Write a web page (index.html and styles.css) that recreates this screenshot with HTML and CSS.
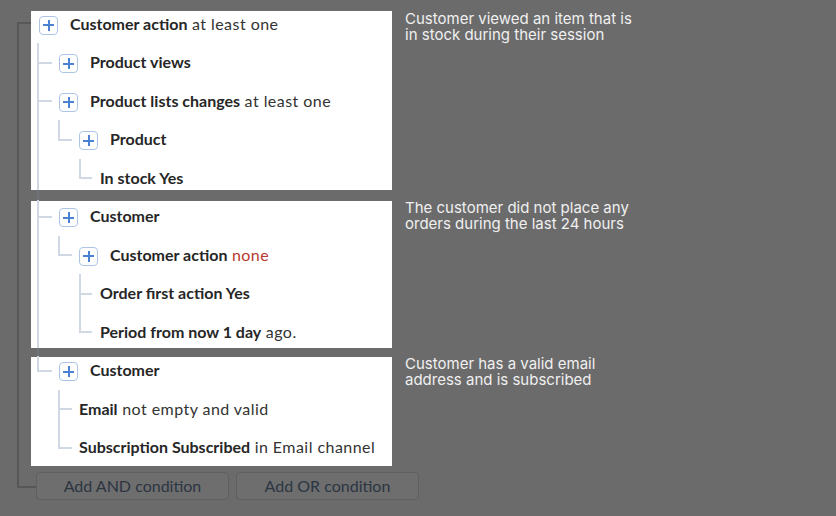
FILE: index.html
```html
<!DOCTYPE html>
<html lang="en">
<head>
<meta charset="utf-8">
<title>Segment conditions</title>
<link rel="stylesheet" href="styles.css">
</head>
<body>
<main class="screen">
  <div class="builder">
    <section class="group g1">
      <div class="row lv0"><button class="add" aria-label="Expand"></button><span class="label"><b>Customer action</b> at least one</span></div>
      <div class="row lv1 t-mid1"><button class="add" aria-label="Expand"></button><span class="label"><b>Product views</b></span></div>
      <div class="row lv1 t-mid1"><button class="add" aria-label="Expand"></button><span class="label"><b>Product lists changes</b> at least one</span></div>
      <div class="row lv2 t-el2"><button class="add" aria-label="Expand"></button><span class="label"><b>Product</b></span></div>
      <div class="row lv3 t-el3 cut-b1"><span class="label"><b>In stock Yes</b></span></div>
    </section>
    <p class="note n1">Customer viewed an item that is<br>in stock during their session</p>

    <section class="group g2">
      <div class="row lv1 t-mid1 cut-t2"><button class="add" aria-label="Expand"></button><span class="label"><b>Customer</b></span></div>
      <div class="row lv2 t-el2"><button class="add" aria-label="Expand"></button><span class="label"><b>Customer action</b> <span class="neg">none</span></span></div>
      <div class="row lv3 t-mid3"><span class="label"><b>Order first action Yes</b></span></div>
      <div class="row lv3 t-el3 cut-b2"><span class="label"><b>Period from now 1 day</b> ago.</span></div>
    </section>
    <p class="note n2">The customer did not place any<br>orders during the last 24 hours</p>

    <section class="group g3">
      <div class="row lv1 t-last1 cut-t3"><button class="add" aria-label="Expand"></button><span class="label"><b>Customer</b></span></div>
      <div class="row lv2leaf t-mid2x"><span class="label"><b>Email</b> not empty and valid</span></div>
      <div class="row lv2leaf t-last2x"><span class="label"><b>Subscription Subscribed</b> in Email channel</span></div>
    </section>
    <p class="note n3">Customer has a valid email<br>address and is subscribed</p>

    <div class="actions">
      <button class="btn btn-and">Add AND condition</button>
      <button class="btn btn-or">Add OR condition</button>
    </div>
  </div>
</main>
</body>
</html>
```

FILE: styles.css
```css
* { box-sizing: border-box; }

html, body {
  margin: 0;
  height: 100%;
}

body {
  background: #6b6b6b;
  font-family: "Lato", "Noto Sans", sans-serif;
  color: #2b2b2b;
}

.screen {
  width: 836px;
  height: 516px;
  overflow: hidden;
}

.builder {
  --bracket: #575757;
  margin-left: 17px;
  padding: 4.75px 0 0 14px;
  display: grid;
  grid-template-columns: 361px 1fr;
  column-gap: 13px;
  align-items: start;
  align-content: start;
  background:
    linear-gradient(var(--bracket), var(--bracket)) 0 22px / 2px 466px no-repeat,
    linear-gradient(var(--bracket), var(--bracket)) 0 22px / 14px 2px no-repeat,
    linear-gradient(var(--bracket), var(--bracket)) 0 486px / 19px 2px no-repeat;
  height: 516px;
}

/* highlighted groups */
.group {
  grid-column: 1;
  background: linear-gradient(#fff, #fff) 0 var(--inset-top) / 100% var(--inset-h) no-repeat;
}
.g1 { --inset-top: 6.25px; --inset-h: 179px; }
.g2 { --inset-top: 3.25px; --inset-h: 147px; }
.g3 { --inset-top: 5.25px; --inset-h: 109px; }

/* rows */
.row {
  --ln: #d0d9e3;
  --dim: #6f7276;
  --d1: 0px;
  --d2: 100%;
  height: 38.5px;
  display: flex;
  align-items: center;
  font-size: 16px;
  white-space: nowrap;
}

.lv0 { padding-left: 8px; }
.lv1 { padding-left: 28px; }
.lv2 { padding-left: 48px; }
.lv2leaf { padding-left: 48px; }
.lv3 { padding-left: 69px; }

.cut-b1 { --d2: 30.75px; }
.cut-b2 { --d2: 34.75px; }
.cut-t2 { --d1: 3.25px; }
.cut-t3 { --d1: 5.25px; }

/* connector lines */
.t-mid1 {
  background:
    linear-gradient(var(--ln), var(--ln)) 6px 50% / 15px 2px no-repeat,
    linear-gradient(to bottom, var(--dim) var(--d1), var(--ln) var(--d1), var(--ln) var(--d2), var(--dim) var(--d2)) 6px 0 / 2px 100% no-repeat;
}
.t-last1 {
  background:
    linear-gradient(var(--ln), var(--ln)) 6px 50% / 15px 2px no-repeat,
    linear-gradient(to bottom, var(--dim) var(--d1), var(--ln) var(--d1)) 6px 0 / 2px 50% no-repeat;
}
.t-el2 {
  background:
    linear-gradient(var(--ln), var(--ln)) 27px 50% / 14px 2px no-repeat,
    linear-gradient(var(--ln), var(--ln)) 27px 0 / 2px 50% no-repeat,
    linear-gradient(to bottom, var(--dim) var(--d1), var(--ln) var(--d1), var(--ln) var(--d2), var(--dim) var(--d2)) 6px 0 / 2px 100% no-repeat;
}
.t-el3 {
  background:
    linear-gradient(var(--ln), var(--ln)) 48px 50% / 13px 2px no-repeat,
    linear-gradient(var(--ln), var(--ln)) 48px 0 / 2px 50% no-repeat,
    linear-gradient(to bottom, var(--dim) var(--d1), var(--ln) var(--d1), var(--ln) var(--d2), var(--dim) var(--d2)) 6px 0 / 2px 100% no-repeat;
}
.t-mid3 {
  background:
    linear-gradient(var(--ln), var(--ln)) 48px 50% / 13px 2px no-repeat,
    linear-gradient(var(--ln), var(--ln)) 48px 0 / 2px 100% no-repeat,
    linear-gradient(to bottom, var(--dim) var(--d1), var(--ln) var(--d1), var(--ln) var(--d2), var(--dim) var(--d2)) 6px 0 / 2px 100% no-repeat;
}
.t-mid2x {
  background:
    linear-gradient(var(--ln), var(--ln)) 27px 50% / 14px 2px no-repeat,
    linear-gradient(var(--ln), var(--ln)) 27px 0 / 2px 100% no-repeat;
}
.t-last2x {
  background:
    linear-gradient(var(--ln), var(--ln)) 27px 50% / 14px 2px no-repeat,
    linear-gradient(var(--ln), var(--ln)) 27px 0 / 2px 50% no-repeat;
}

/* expand button */
.add {
  flex: none;
  width: 19px;
  height: 19px;
  margin: 2px 12px 0 0;
  padding: 0;
  border: 1px solid #aec4e4;
  border-radius: 4px;
  background:
    linear-gradient(#4b81d2, #4b81d2) center / 11px 2px no-repeat,
    linear-gradient(#4b81d2, #4b81d2) center / 2px 11px no-repeat,
    #fff;
}

.label { color: #333; letter-spacing: 0.45px; margin-bottom: 2px; }
.label b { font-weight: 700; color: #262626; letter-spacing: 0; }
.neg { color: #b8392f; }

/* notes */
.note {
  grid-column: 2;
  margin: 0;
  font-family: "Inter", "Noto Sans", sans-serif;
  font-size: 15px;
  line-height: 16px;
  color: #f0f0f0;
  white-space: nowrap;
}
.n1 { grid-row: 1; padding-top: 5.75px; }
.n2 { grid-row: 2; padding-top: 2.75px; }
.n3 { grid-row: 3; padding-top: 4.75px; }

/* actions */
.actions {
  grid-column: 1 / span 2;
  display: flex;
  gap: 7px;
  margin: 4.75px 0 0 5px;
}
.btn {
  height: 28px;
  padding: 0;
  border: 1px solid #606060;
  border-radius: 4px;
  background: #6e6e6e;
  color: #2c3542;
  font-family: "Lato", "Noto Sans", sans-serif;
  font-size: 16px;
}
.btn-and { width: 193px; }
.btn-or { width: 183px; }
```
